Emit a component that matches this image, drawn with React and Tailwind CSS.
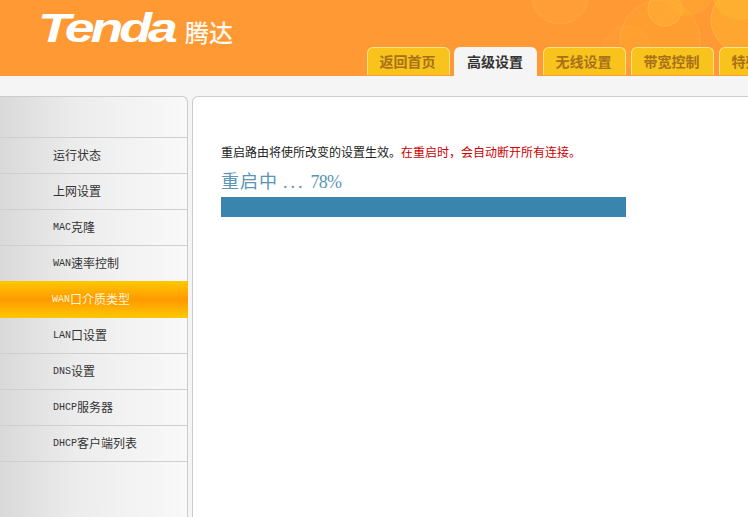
const cjk = "font-['Noto_Sans_CJK_SC','Liberation_Sans',sans-serif]";

const tabs = [
  { label: "返回首页" },
  { label: "高级设置", active: true },
  { label: "无线设置" },
  { label: "带宽控制" },
  { label: "特殊应用" },
];

const menu = [
  { label: "运行状态" },
  { label: "上网设置" },
  { latin: "MAC", label: "克隆" },
  { latin: "WAN", label: "速率控制" },
  { latin: "WAN", label: "口介质类型", active: true },
  { latin: "LAN", label: "口设置" },
  { latin: "DNS", label: "设置" },
  { latin: "DHCP", label: "服务器" },
  { latin: "DHCP", label: "客户端列表" },
];

function Bubbles() {
  return (
    <svg className="absolute right-0 top-0" width="240" height="76" viewBox="0 0 240 76" fill="none">
      <circle cx="52" cy="-4" r="28" fill="#ffb347" fillOpacity="0.15" stroke="#ffc468" strokeOpacity="0.3" />
      <circle cx="119" cy="50" r="24" fill="#ffa733" fillOpacity="0.15" stroke="#ffc468" strokeOpacity="0.2" />
      <circle cx="152" cy="40" r="40" fill="#ffa92c" fillOpacity="0.35" stroke="#ffc468" strokeOpacity="0.3" />
      <circle cx="157" cy="9" r="17" fill="#ffb83c" fillOpacity="0.3" stroke="#ffd070" strokeOpacity="0.35" />
      <circle cx="180" cy="-10" r="26" fill="#ffb52e" fillOpacity="0.35" />
      <circle cx="235" cy="20" r="32" fill="#ffb52e" fillOpacity="0.45" stroke="#ffd070" strokeOpacity="0.4" />
      <circle cx="232" cy="-8" r="28" fill="#ffbe30" fillOpacity="0.4" />
    </svg>
  );
}

function Header() {
  return (
    <header className="relative flex h-[76px] items-end bg-[#ff9933] pl-[367px]">
      <Bubbles />
      <span className="absolute left-[38px] top-[5px] origin-left scale-x-[1.34] font-['Liberation_Sans',sans-serif] text-[40px] font-bold italic leading-[46px] tracking-[-3px] text-white">
        Tenda
      </span>
      <span className="absolute left-[185px] top-[16px] whitespace-nowrap font-['Noto_Sans_CJK_SC',sans-serif] text-[24px] font-medium leading-[32px] text-[#fff8ee]">
        腾达
      </span>
      <nav className="relative flex shrink-0 gap-[5px]">
        {tabs.map((tab) =>
          tab.active ? (
            <div
              key={tab.label}
              className={`-ml-px mr-px flex h-[29px] w-[83px] shrink-0 items-center justify-center rounded-t-[6px] bg-[#f5f5f5] pr-[1px] text-[14px] font-bold text-[#333333] ${cjk}`}
            >
              {tab.label}
            </div>
          ) : (
            <div
              key={tab.label}
              className={`flex h-[28px] w-[83px] shrink-0 items-center justify-center rounded-t-[6px] border border-b-0 border-[#ffe08a] bg-[#f7c31c] pr-[2px] text-[14px] font-bold text-[#a9701a] ${cjk}`}
            >
              {tab.label}
            </div>
          )
        )}
      </nav>
    </header>
  );
}

function Sidebar() {
  return (
    <aside className="w-[188px] shrink-0 rounded-tr-[6px] border-r border-t border-[#cccccc] bg-gradient-to-r from-[#d9d9d9] via-[#ececec] via-40% to-[#f9f9f9] pt-[40px]">
      <ul className="border-t border-[#cfcfcf]">
        {menu.map((item) => (
          <li
            key={(item.latin || "") + item.label}
            className={
              item.active
                ? `-mr-px -mt-px flex h-[37px] items-center bg-gradient-to-b from-[#ffc800] via-[#ff9900] via-50% to-[#ffc800] pb-[2px] pl-[52px] text-[12px] text-[#fff6d8] ${cjk}`
                : `flex h-[36px] items-center border-b border-[#cfcfcf] pb-[2px] pl-[53px] text-[12px] text-[#333333] ${cjk}`
            }
          >
            {item.latin && <span className="mt-[1px] font-['Liberation_Mono',monospace] text-[10px]">{item.latin}</span>}
            {item.label}
          </li>
        ))}
      </ul>
    </aside>
  );
}

function Content() {
  return (
    <main className="ml-[4px] flex-1 rounded-tl-[6px] border-l border-t border-[#cccccc] bg-white pl-[28px] pt-[46px]">
      <p className={`text-[12px] leading-[17px] text-[#222222] ${cjk}`}>
        重启路由将使所改变的设置生效。
        <span className="text-[#cc0000]">在重启时，会自动断开所有连接。</span>
      </p>
      <p className={`mt-[7px] h-[26px] text-[18px] leading-[26px] tracking-[1px] text-[#5a96b4] ${cjk}`}>
        重启中<span className="ml-[5px] font-['Liberation_Serif',serif] tracking-[3px]">...</span>
        <span className="ml-[5px] font-['Liberation_Serif',serif] tracking-[-0.8px]">78%</span>
      </p>
      <div className="mt-[4px] h-[20px] w-[405px] bg-[#3a85ad]" />
    </main>
  );
}

export default function App() {
  return (
    <div className="flex h-[517px] w-[748px] flex-col overflow-hidden bg-[#f5f5f5]">
      <Header />
      <div className="mt-[20px] flex flex-1">
        <Sidebar />
        <Content />
      </div>
    </div>
  );
}
